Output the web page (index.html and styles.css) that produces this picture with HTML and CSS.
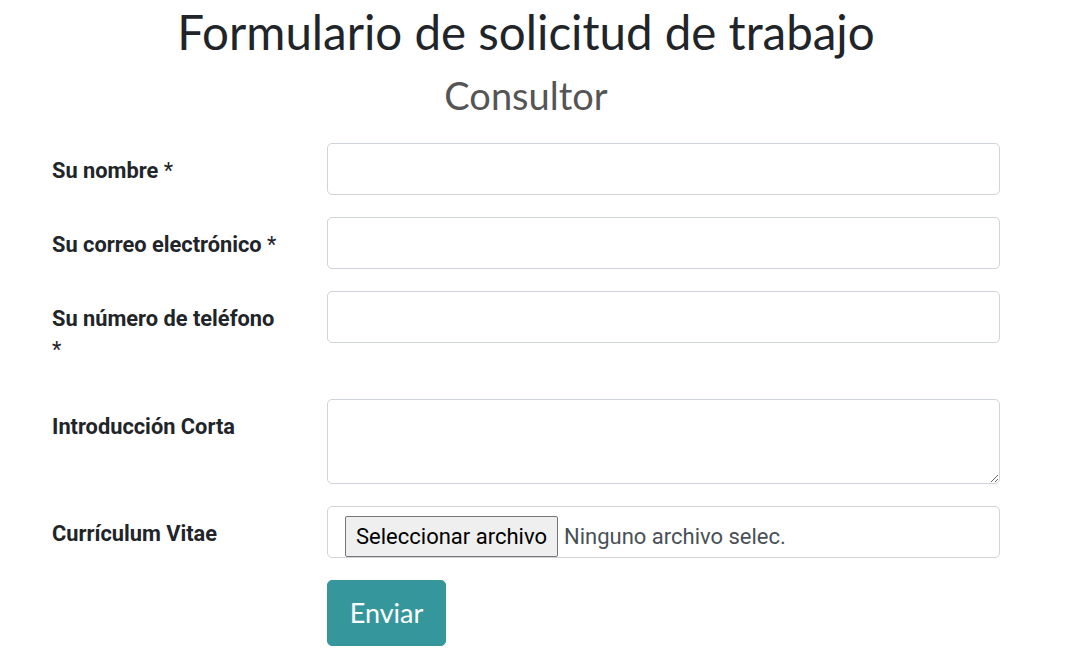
FILE: index.html
```html
<!DOCTYPE html>
<html lang="es">
<head>
<meta charset="utf-8">
<title>Formulario de solicitud de trabajo</title>
<link rel="stylesheet" href="styles.css">
</head>
<body>
<div class="container">
  <h1 class="title">Formulario de solicitud de trabajo</h1>
  <h2 class="subtitle">Consultor</h2>
  <form class="form">
    <div class="row">
      <label class="label">Su nombre <span class="req">*</span></label>
      <div class="field"><input class="input" type="text"></div>
    </div>
    <div class="row">
      <label class="label">Su correo electrónico <span class="req">*</span></label>
      <div class="field"><input class="input" type="text"></div>
    </div>
    <div class="row">
      <label class="label label-wrap">Su número de teléfono <span class="req">*</span></label>
      <div class="field"><input class="input" type="text"></div>
    </div>
    <div class="row">
      <label class="label">Introducción Corta</label>
      <div class="field"><textarea class="input textarea"></textarea></div>
    </div>
    <div class="row">
      <label class="label">Currículum Vitae</label>
      <div class="field">
        <div class="input file">
          <span class="file-btn">Seleccionar archivo</span>
          <span class="file-name">Ninguno archivo selec.</span>
        </div>
      </div>
    </div>
    <div class="row">
      <div class="label-spacer"></div>
      <div class="field"><button type="button" class="btn">Enviar</button></div>
    </div>
  </form>
</div>
</body>
</html>
```

FILE: styles.css
```css
* { box-sizing: border-box; }
html, body { margin: 0; padding: 0; background: #fff; }
body { font-family: Roboto, "Liberation Sans", sans-serif; color: #212529; }

.container {
  margin-left: 37px;
  width: 978px;
  padding: 0 15px;
}

.title {
  font-family: Lato, "Open Sans", sans-serif;
  font-weight: 400;
  font-size: 47.5px;
  line-height: 64px;
  margin: 0;
  text-align: center;
  color: #212529;
}
.subtitle {
  font-family: Lato, "Open Sans", sans-serif;
  font-weight: 400;
  font-size: 38px;
  line-height: 48px;
  margin: 7px 0 0;
  text-align: center;
  color: #555;
}

.form { margin-top: 24px; }

.row {
  display: flex;
  margin-bottom: 22px;
}
.label {
  width: 275px;
  padding: 12px 43px 9px 0;
  font-size: 21.8px;
  line-height: 31px;
  font-weight: 700;
  color: #212529;
}
.label-wrap { padding-bottom: 12px; }
.req { font-weight: 400; }
.label-spacer { width: 275px; }
.field { flex: 1; }

.input {
  display: block;
  width: 100%;
  height: 52px;
  border: 1px solid #ced4da;
  border-radius: 5px;
  padding: 10px 16px;
  font-family: Roboto, sans-serif;
  font-size: 22px;
  background: #fff;
}
.textarea { height: 85px; resize: vertical; }

.file {
  display: flex;
  align-items: center;
  padding: 9px 17px 0;
  overflow: hidden;
}
.file-btn {
  display: inline-block;
  height: 41px;
  line-height: 39px;
  padding: 0 10px;
  background: #efefef;
  border: 1px solid #767676;
  border-radius: 2px;
  color: #000;
  font-size: 22px;
  margin-right: 6px;
  white-space: nowrap;
}
.file-name { color: #495057; font-size: 22px; white-space: nowrap; }

.btn {
  display: block;
  width: 119px;
  height: 66px;
  background: #35979c;
  color: #fff;
  border: 1px solid #35979c;
  border-radius: 5px;
  font-family: Lato, "Open Sans", sans-serif;
  font-size: 27px;
  line-height: 40px;
  padding: 0;
  cursor: pointer;
}
```
